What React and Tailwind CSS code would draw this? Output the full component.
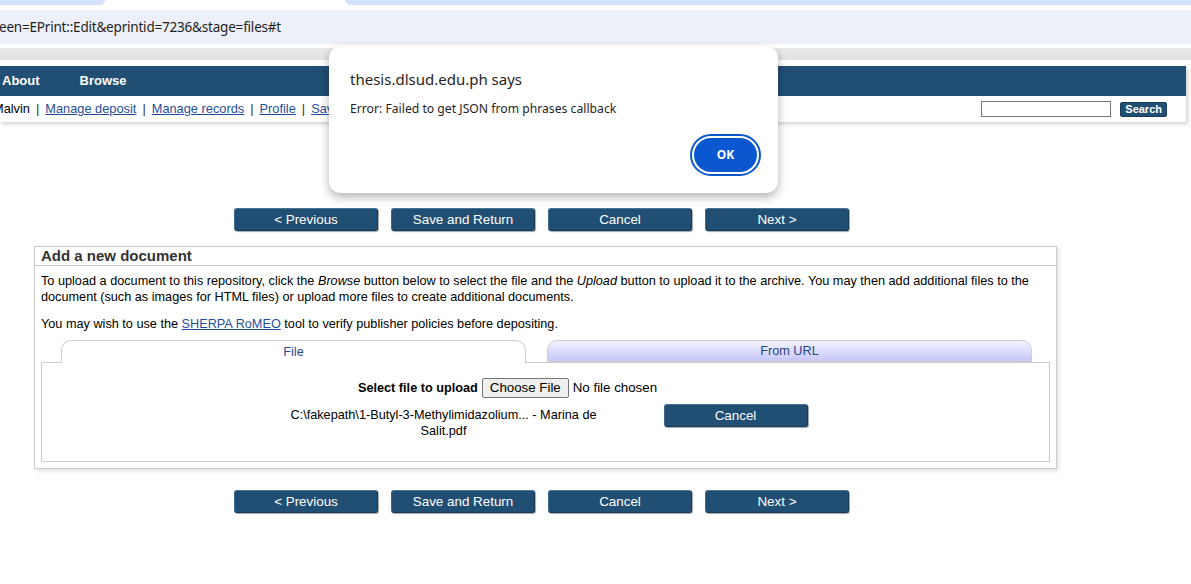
const navBlue = "bg-[#214e73]";

const ActionButton = ({ label, className = "" }) => (
  <button
    className={`w-[144px] h-[23px] ${navBlue} text-white text-[13.4px] leading-none rounded-[3px] border border-[#163a57] border-t-[#4b7396] border-l-[#3d6a8f] shadow-[1px_1px_1px_rgba(0,0,0,0.35)] ${className}`}
  >
    {label}
  </button>
);

const ButtonBar = () => (
  <div className="flex gap-[13px] ml-[234px]">
    <ActionButton label="< Previous" />
    <ActionButton label="Save and Return" />
    <ActionButton label="Cancel" />
    <ActionButton label="Next >" />
  </div>
);

const Sep = () => <span className="text-[#333]">|</span>;

export default function App() {
  return (
    <div className="relative w-[1191px] h-[584px] overflow-hidden bg-white font-['Liberation_Sans',Arial,sans-serif] text-black">
      {/* browser chrome */}
      <div className="flex h-[5px]">
        <div className="w-[105px] bg-[#d3e3fd] rounded-br-[8px]" />
        <div className="w-[240px] bg-white" />
        <div className="flex-1 bg-[#d3e3fd] rounded-bl-[8px]" />
      </div>
      <div className="h-[5px]" />
      <div className="h-[34px] bg-[#edf0f8] flex items-center">
        <span className="ml-[-1px] text-[13.5px] text-[#1f1f1f] font-['Noto_Sans',sans-serif] tracking-[-0.2px]">
          een=EPrint::Edit&amp;eprintid=7236&amp;stage=files#t
        </span>
      </div>
      <div className="h-[4px]" />
      <div className="h-[12px] bg-gradient-to-b from-[#e9e9e9] to-[#e2e2e2]" />
      <div className="h-[6px]" />

      {/* site header */}
      <div className="w-[1186px] shadow-[2px_2px_4px_rgba(0,0,0,0.18)]">
        <div className={`h-[30px] ${navBlue} flex items-center gap-[40px] pl-[2px] text-white font-bold text-[13px]`}>
          <span>About</span>
          <span>Browse</span>
        </div>
        <div className="h-[26px] bg-white flex items-center text-[12.8px]">
          <div className="flex items-center gap-[6px] ml-[-7px]">
            <span>Malvin</span>
            <Sep />
            <span className="text-[#1f4f9c] underline">Manage deposit</span>
            <Sep />
            <span className="text-[#1f4f9c] underline">Manage records</span>
            <Sep />
            <span className="text-[#1f4f9c] underline">Profile</span>
            <Sep />
            <span className="text-[#1f4f9c] underline">Saved searches</span>
            <Sep />
            <span className="text-[#1f4f9c] underline">Review</span>
            <Sep />
            <span className="text-[#1f4f9c] underline">Logout</span>
          </div>
          <div className="ml-auto flex items-center gap-[9px] mr-[19px]">
            <input className="w-[130px] h-[16px] border border-[#767676] bg-white" />
            <button className={`h-[15px] px-[4px] ${navBlue} text-white text-[11px] font-bold leading-none rounded-[2px] border border-[#163a57]`}>
              Search
            </button>
          </div>
        </div>
      </div>

      {/* page content */}
      <div className="mt-[86px]">
        <ButtonBar />
      </div>

      <div className="mt-[15px] ml-[34px] w-[1023px] border border-[#cccccc] shadow-[2px_2px_4px_rgba(0,0,0,0.12)] bg-white">
        <div className="h-[19px] border-b border-[#cccccc] px-[6px] flex items-center text-[15px] font-bold text-[#333]">
          Add a new document
        </div>
        <div className="px-[6px] pt-[7px] pb-[6px] text-[12.7px] leading-[16px]">
          <p>
            To upload a document to this repository, click the <i>Browse</i> button below to select the file and the{" "}
            <i>Upload</i> button to upload it to the archive. You may then add additional files to the document (such
            as images for HTML files) or upload more files to create additional documents.
          </p>
          <p className="mt-[11px]">
            You may wish to use the <span className="text-[#1f4f9c] underline">SHERPA RoMEO</span> tool to verify
            publisher policies before depositing.
          </p>

          {/* tabs */}
          <div className="mt-[8px] flex pl-[20px] gap-[21px]">
            <div className="w-[465px] h-[23px] bg-white border border-b-0 border-[#cccccc] rounded-t-[10px] flex items-center justify-center text-[#2a4d8f] relative z-10">
              File
            </div>
            <div className="w-[485px] h-[22px] bg-gradient-to-b from-[#f4f4ff] to-[#c6c6f8] border border-[#cccccc] rounded-t-[10px] flex items-center justify-center text-[#24468a]">
              From URL
            </div>
          </div>
          <div className="mt-[-1px] h-[100px] border border-[#cccccc] bg-white pt-[15px]">
            <div className="flex items-center justify-center pr-[76px] gap-[4px]">
              <span className="font-bold">Select file to upload</span>
              <span className="h-[20px] px-[7px] bg-[#efefef] border border-[#767676] rounded-[2px] flex items-center text-[13.3px]">
                Choose File
              </span>
              <span className="text-[13.3px]">No file chosen</span>
            </div>
            <div className="mt-[6px] flex items-start justify-center gap-[60px]">
              <div className="w-[320px] text-center leading-[16px] pt-[3px]">
                C:\fakepath\1-Butyl-3-Methylimidazolium... - Marina de Salit.pdf
              </div>
              <ActionButton label="Cancel" />
            </div>
          </div>
        </div>
      </div>

      <div className="mt-[21px]">
        <ButtonBar />
      </div>

      {/* browser alert dialog */}
      <div className="absolute left-[329px] top-[46px] w-[449px] h-[147px] bg-white rounded-[12px] shadow-[0_4px_10px_rgba(0,0,0,0.3)] pl-[21px] pr-[17px] pt-[22px] font-['Noto_Sans',sans-serif] flex flex-col">
        <div className="text-[15px] leading-[22px] text-[#1f1f1f]">thesis.dlsud.edu.ph says</div>
        <div className="mt-[10px] text-[12.2px] leading-[18px] text-[#1f1f1f]">Error: Failed to get JSON from phrases callback</div>
        <div className="mt-auto mb-[17px] flex justify-end">
          <button className="w-[71px] h-[42px] rounded-full border-2 border-[#0b57d0] p-[2px]">
            <span className="w-full h-full rounded-full bg-[#0b57d0] text-white text-[12px] font-bold flex items-center justify-center">
              OK
            </span>
          </button>
        </div>
      </div>
    </div>
  );
}
